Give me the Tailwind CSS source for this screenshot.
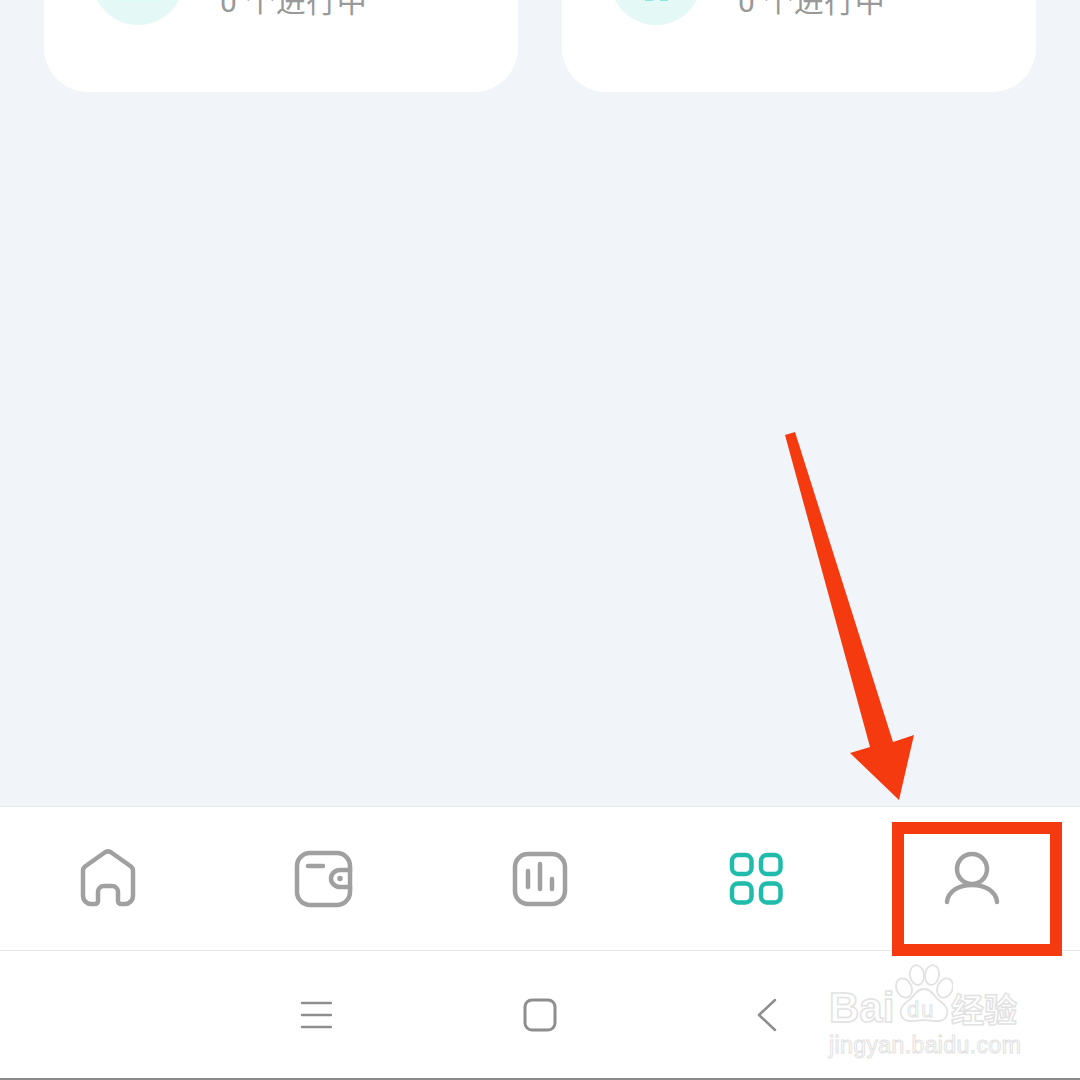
<!DOCTYPE html>
<html lang="zh">
<head>
  <meta charset="UTF-8" />
  <meta name="viewport" content="width=device-width, initial-scale=1" />
  <title>Tools</title>
  <script src="https://cdn.jsdelivr.net/npm/@tailwindcss/browser@4"></script>
</head>
<body class="bg-white font-['Roboto','Noto_Sans_CJK_SC',sans-serif]">
  <div class="relative w-[1080px] h-[1080px] overflow-hidden flex flex-col">

    <!-- Cards, scrolled mostly out of view -->
    <main class="h-[806px] shrink-0 bg-[#f1f5fa] overflow-hidden">
      <div class="grid grid-cols-2 gap-[44px] px-[44px] -mt-[108px]">
        <div class="h-[200px] bg-white rounded-[44px] flex items-start pl-[48px] pt-[41px] gap-[36px]">
          <div class="relative w-[92px] h-[92px] rounded-full bg-[#e4f8f6] overflow-hidden">
            <div class="absolute left-[24px] top-[60px] w-[44px] h-[8px] bg-[#d8fbf8]"></div>
          </div>
          <p class="text-[30px] leading-[40px] mt-[49px] text-[#999999] whitespace-pre tracking-[0.5px]">0 个进行中</p>
        </div>
        <div class="h-[200px] bg-white rounded-[44px] flex items-start pl-[48px] pt-[41px] gap-[36px]">
          <div class="relative w-[92px] h-[92px] rounded-full bg-[#e4f8f6] overflow-hidden">
            <div class="absolute left-[35px] top-[64px] w-[8px] h-[4px] bg-[#8fe6dd]"></div>
            <div class="absolute left-[50px] top-[64px] w-[8px] h-[4px] bg-[#8fe6dd]"></div>
          </div>
          <p class="text-[30px] leading-[40px] mt-[49px] text-[#999999] whitespace-pre tracking-[0.5px]">0 个进行中</p>
        </div>
      </div>
    </main>

    <!-- Tab bar -->
    <nav class="h-[145px] shrink-0 bg-white border-t border-b border-[#e8e8e8] flex items-center">
      <div class="w-[216px] flex justify-center">
        <svg width="60" height="60" viewBox="0 0 60 60" fill="none" stroke="#a0a0a0" stroke-width="4.500" stroke-linejoin="round" stroke-linecap="round">
          <path d="M5 22 a6 6 0 0 1 2-4.500 L26 4 a6.500 6.500 0 0 1 8 0 L53 17.500 a6 6 0 0 1 2 4.500 V47 a8 8 0 0 1-8 8 H43 a3 3 0 0 1-3-3 V43 a6 6 0 0 0-6-6 H26 a6 6 0 0 0-6 6 V52 a3 3 0 0 1-3 3 H13 a8 8 0 0 1-8-8 Z" />
        </svg>
      </div>
      <div class="w-[216px] flex justify-center">
        <svg width="60" height="60" viewBox="0 0 60 60" fill="none" stroke="#a0a0a0" stroke-width="4.500" stroke-linecap="round">
          <path d="M56 22 V17 a13 13 0 0 0-13-13 H16 a13 13 0 0 0-13 13 V43 a13 13 0 0 0 13 13 H43 a13 13 0 0 0 13-13 V38" />
          <path d="M14 17 H29" />
          <path d="M56 21 H46 a9 8.500 0 0 0 0 17 H56 Z" />
          <circle cx="46" cy="29.500" r="2" fill="#a0a0a0" stroke-width="1.500" />
        </svg>
      </div>
      <div class="w-[216px] flex justify-center">
        <svg width="60" height="60" viewBox="0 0 60 60" fill="none" stroke="#a0a0a0" stroke-width="4.500" stroke-linecap="round">
          <rect x="5" y="5" width="50" height="50" rx="13" />
          <path d="M18 22 V38 M30 15 V40 M42 30 V40" />
        </svg>
      </div>
      <div class="w-[216px] flex justify-center">
        <svg width="60" height="60" viewBox="0 0 60 60" fill="none" stroke="#1fbcab" stroke-width="4.500">
          <rect x="6" y="6" width="19.500" height="19" rx="6" />
          <rect x="35" y="6" width="19.500" height="19" rx="6" />
          <rect x="6" y="34.500" width="19.500" height="19" rx="6" />
          <rect x="35" y="34.500" width="19.500" height="19" rx="6" />
        </svg>
      </div>
      <div class="w-[216px] flex justify-center">
        <svg width="60" height="60" viewBox="0 0 60 60" fill="none" stroke="#a0a0a0" stroke-width="4.500" stroke-linecap="round">
          <circle cx="30" cy="20" r="15" />
          <path d="M5 53 C6 42 17 36 30 36 C43 36 54 42 55 53" />
        </svg>
      </div>
    </nav>

    <!-- System navigation -->
    <div class="flex-1 bg-white border-b-2 border-[#8a8a8a] flex justify-center items-center">
      <div class="w-[224px] flex justify-center">
        <svg width="32" height="32" viewBox="0 0 32 32" fill="none" stroke="#8e8e8e" stroke-width="2.500" stroke-linecap="round">
          <path d="M2 4 H31 M2 16 H31 M2 28 H31" />
        </svg>
      </div>
      <div class="w-[224px] flex justify-center">
        <svg width="34" height="34" viewBox="0 0 34 34" fill="none" stroke="#8e8e8e" stroke-width="3">
          <rect x="2" y="2" width="30" height="30" rx="7" />
        </svg>
      </div>
      <div class="w-[224px] flex justify-center">
        <svg class="ml-[6px]" width="20" height="34" viewBox="0 0 20 34" fill="none" stroke="#8e8e8e" stroke-width="2.500" stroke-linecap="round" stroke-linejoin="round">
          <path d="M18 2 L2 17 L18 32" />
        </svg>
      </div>
    </div>

    <!-- Annotation: arrow and highlight box -->
    <svg class="absolute left-0 top-0 pointer-events-none" width="1080" height="1080" viewBox="0 0 1080 1080">
      <polygon fill="#f63a10" points="785,435 795,432 893,742 914,735 899,800 850,753 870,747" />
    </svg>
    <div class="absolute left-[892px] top-[822px] w-[170px] h-[134px] border-[12px] border-[#f63a10]"></div>

    <!-- Watermark -->
    <div class="absolute left-[829px] top-[962px] w-[200px] h-[100px] pointer-events-none text-transparent [-webkit-text-stroke:1.5px_#e2e2e2]">
      <span class="absolute left-0 top-[29px] text-[42px] leading-[34px] font-bold font-['Liberation_Sans']">Bai</span>
      <svg class="absolute left-[66px] top-[2px]" width="58" height="60" viewBox="0 0 58 60" fill="none" stroke="#e2e2e2" stroke-width="1.800">
        <ellipse cx="9" cy="24" rx="7.500" ry="10" transform="rotate(-25 9 24)" />
        <ellipse cx="22" cy="11" rx="7" ry="10" transform="rotate(-8 22 11)" />
        <ellipse cx="37" cy="11" rx="7" ry="10" transform="rotate(8 37 11)" />
        <ellipse cx="50" cy="24" rx="7.500" ry="10" transform="rotate(25 50 24)" />
        <path d="M29 25 C21 25 19 33 13 37 C6 42 4 48 7 53 C11 59 19 57 29 56 C39 57 47 59 51 53 C54 48 52 42 45 37 C39 33 37 25 29 25 Z" />
      </svg>
      <span class="absolute left-[78px] top-[36px] text-[22px] leading-[24px] tracking-[2px] font-['Liberation_Sans'] [-webkit-text-stroke:1px_#e2e2e2]">du</span>
      <span class="absolute left-[122px] top-[29px] text-[33px] leading-[34px] font-bold whitespace-nowrap font-['Noto_Sans_CJK_SC']">经验</span>
      <span class="absolute left-0 top-[70px] text-[23px] leading-[26px] whitespace-nowrap font-['Liberation_Sans'] tracking-[0.4px] [-webkit-text-stroke:1px_#e2e2e2]">jingyan.baidu.com</span>
    </div>
  </div>
</body>
</html>
